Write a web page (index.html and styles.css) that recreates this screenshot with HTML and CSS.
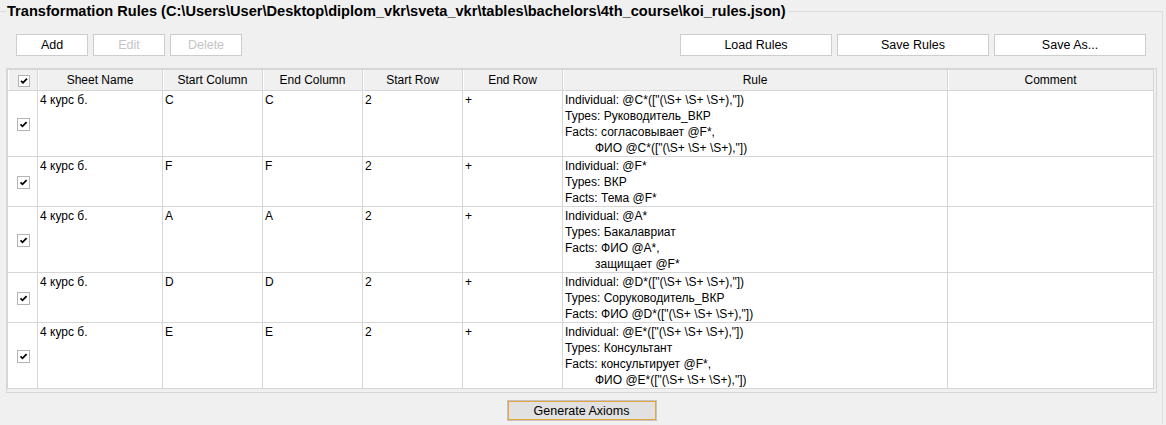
FILE: index.html
```html
<!DOCTYPE html>
<html lang="ru">
<head>
<meta charset="utf-8">
<title>Transformation Rules</title>
<link rel="stylesheet" href="styles.css">
</head>
<body>
<fieldset class="group">
  <legend class="group-title">Transformation Rules (C:\Users\User\Desktop\diplom_vkr\sveta_vkr\tables\bachelors\4th_course\koi_rules.json)</legend>
  <div class="toolbar">
    <div class="btn-group">
      <button class="btn btn-sm">Add</button>
      <button class="btn btn-sm" disabled>Edit</button>
      <button class="btn btn-sm" disabled>Delete</button>
    </div>
    <div class="btn-group">
      <button class="btn btn-lg">Load Rules</button>
      <button class="btn btn-lg">Save Rules</button>
      <button class="btn btn-lg">Save As...</button>
    </div>
  </div>
  <div class="pane">
    <table class="grid">
      <thead>
        <tr>
          <th class="c-chk"><span class="check check-hd"><svg viewBox="0 0 10 10"><path d="M2 4.8 L4 6.8 L8 2.6"/></svg></span></th>
          <th class="c-sheet">Sheet Name</th>
          <th class="c-std">Start Column</th>
          <th class="c-std">End Column</th>
          <th class="c-std">Start Row</th>
          <th class="c-std">End Row</th>
          <th class="c-rule">Rule</th>
          <th class="c-comment">Comment</th>
        </tr>
      </thead>
      <tbody>
        <tr>
          <td class="chk"><span class="check"><svg viewBox="0 0 11 11"><path d="M2.5 5.3 L4.5 7.3 L8.6 3.1"/></svg></span></td>
          <td>4 курс б.</td><td>C</td><td>C</td><td>2</td><td>+</td>
          <td><div>Individual: @C*(["(\S+ \S+ \S+),"])</div><div>Types: Руководитель_ВКР</div><div>Facts: согласовывает @F*,</div><div class="ind">ФИО @C*(["(\S+ \S+ \S+),"])</div></td>
          <td></td>
        </tr>
        <tr>
          <td class="chk"><span class="check"><svg viewBox="0 0 11 11"><path d="M2.5 5.3 L4.5 7.3 L8.6 3.1"/></svg></span></td>
          <td>4 курс б.</td><td>F</td><td>F</td><td>2</td><td>+</td>
          <td><div>Individual: @F*</div><div>Types: ВКР</div><div>Facts: Тема @F*</div></td>
          <td></td>
        </tr>
        <tr>
          <td class="chk"><span class="check"><svg viewBox="0 0 11 11"><path d="M2.5 5.3 L4.5 7.3 L8.6 3.1"/></svg></span></td>
          <td>4 курс б.</td><td>A</td><td>A</td><td>2</td><td>+</td>
          <td><div>Individual: @A*</div><div>Types: Бакалавриат</div><div>Facts: ФИО @A*,</div><div class="ind">защищает @F*</div></td>
          <td></td>
        </tr>
        <tr>
          <td class="chk"><span class="check"><svg viewBox="0 0 11 11"><path d="M2.5 5.3 L4.5 7.3 L8.6 3.1"/></svg></span></td>
          <td>4 курс б.</td><td>D</td><td>D</td><td>2</td><td>+</td>
          <td><div>Individual: @D*(["(\S+ \S+ \S+),"])</div><div>Types: Соруководитель_ВКР</div><div>Facts: ФИО @D*(["(\S+ \S+ \S+),"])</div></td>
          <td></td>
        </tr>
        <tr>
          <td class="chk"><span class="check"><svg viewBox="0 0 11 11"><path d="M2.5 5.3 L4.5 7.3 L8.6 3.1"/></svg></span></td>
          <td>4 курс б.</td><td>E</td><td>E</td><td>2</td><td>+</td>
          <td><div>Individual: @E*(["(\S+ \S+ \S+),"])</div><div>Types: Консультант</div><div>Facts: консультирует @F*,</div><div class="ind">ФИО @E*(["(\S+ \S+ \S+),"])</div></td>
          <td></td>
        </tr>
      </tbody>
    </table>
  </div>
  <button class="btn btn-primary">Generate Axioms</button>
</fieldset>
</body>
</html>
```
FILE: styles.css
```css
html, body {
  margin: 0;
  padding: 0;
  overflow: hidden;
  background: #f0f0f0;
}

body {
  font-family: "Liberation Sans", Arial, sans-serif;
  font-size: 12px;
  color: #000;
}

.group {
  margin: 3px 3px 0 0;
  padding: 15px 5px 3px 6px;
  border: 1px solid #dcdcdc;
  border-left: 0;
  border-bottom: 0;
  min-inline-size: 0;
}

.group-title {
  padding: 0 2px 0 1px;
  font-size: 14.6px;
  font-weight: bold;
  line-height: 16px;
  color: #000;
}

.toolbar {
  display: flex;
  justify-content: space-between;
  padding: 0 11px 0 10px;
  margin-bottom: 12px;
}

.btn-group {
  display: flex;
  gap: 5px;
}

.btn {
  box-sizing: border-box;
  height: 22px;
  padding: 0;
  margin: 0;
  border: 1px solid #cdcdcd;
  border-radius: 0;
  background: #fff;
  font-family: "Liberation Sans", Arial, sans-serif;
  font-size: 12.5px;
  color: #000;
}

.btn:disabled {
  color: #c4c4c4;
}

.btn-sm {
  width: 72px;
}

.btn-lg {
  width: 152px;
}

.btn-primary {
  display: block;
  width: 150px;
  height: 21px;
  margin: 7px auto 0;
  background: #e1e1e1;
  border: 1px solid #c4c4c4;
  box-shadow: inset 0 0 0 1px #e8a43e;
}

.pane {
  border: 1px solid #d6d6d6;
  padding: 0 2px 3px 0;
}

.grid {
  box-sizing: border-box;
  width: 1147px;
  table-layout: fixed;
  border-collapse: separate;
  border-spacing: 0;
  border-top: 1px solid #d6d6d6;
  border-left: 1px solid #d6d6d6;
}

.grid th,
.grid td {
  box-sizing: border-box;
  border-right: 1px solid #d6d6d6;
  border-bottom: 1px solid #d6d6d6;
  white-space: nowrap;
  overflow: hidden;
}

.grid th {
  height: 21px;
  padding: 0;
  font-weight: normal;
  line-height: 20px;
  text-align: center;
  background: #f0f0f0;
  box-shadow: inset 1px 0 0 #fff;
}

.grid td {
  padding: 1px 2px 0;
  line-height: 16px;
  vertical-align: top;
  background: #fff;
}

.grid td.chk {
  padding: 1px 0 0;
  vertical-align: middle;
  text-align: center;
}

.c-chk { width: 30px; }
.c-sheet { width: 125px; }
.c-std { width: 100px; }
.c-rule { width: 385px; }
.c-comment { width: 206px; }

.ind {
  padding-left: 30px;
}

.check {
  display: inline-block;
  box-sizing: border-box;
  width: 13px;
  height: 13px;
  border: 1px solid #b4b4b4;
  background: #fff;
  vertical-align: middle;
  margin-left: 1px;
}

.check svg {
  display: block;
  width: 11px;
  height: 11px;
}

.check path {
  fill: none;
  stroke: #000;
  stroke-width: 1.8;
}

.check-hd {
  width: 12px;
  height: 12px;
  margin-left: 3px;
}

.check-hd svg {
  width: 10px;
  height: 10px;
}
```
